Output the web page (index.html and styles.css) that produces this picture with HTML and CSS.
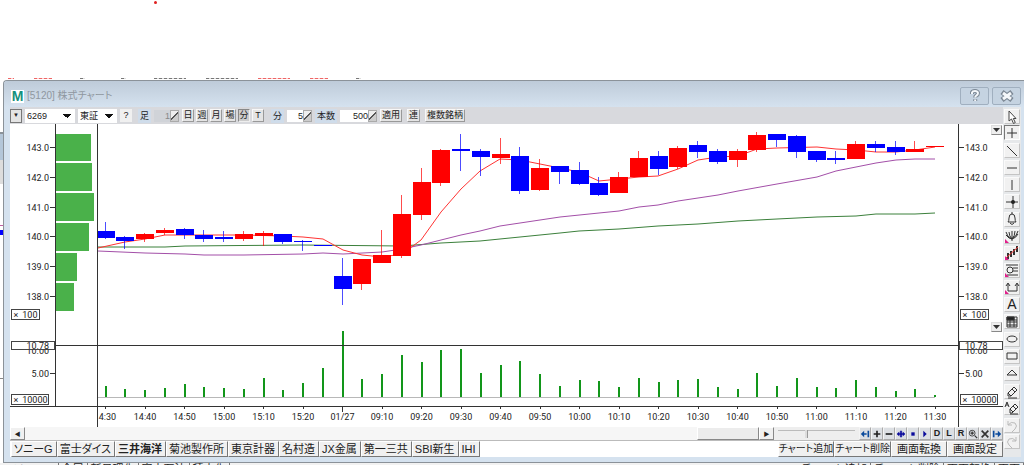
FILE: index.html
```
<!DOCTYPE html>
<html lang="ja">
<head>
  <meta charset="UTF-8" />
  <meta name="viewport" content="width=device-width, initial-scale=1" />
  <title>[5120] 株式チャート</title>
  <link rel="stylesheet" href="styles.css">
</head>
<body>
  <!-- Area above the chart window -->
  <div class="upper">
    <span class="dot"></span>
    <div class="sliver sliver-top">
      <i class="red w1"></i><i class="red w2"></i><i class="w3"></i><i class="w3"></i><i class="w4"></i><i class="w4"></i><i class="red w4"></i><i class="red w2"></i><i class="w3"></i>
    </div>
  </div>

  <div class="desk">
    <div class="edge"></div>
    <div class="window">
      <header class="titlebar">
        <span class="logo">M</span>
        <h1 class="title">[5120] 株式チャート</h1>
        <button class="cap" aria-label="ヘルプ">
          <svg width="14" height="14" viewBox="0 0 14 14"><path d="M4 5V3.500Q4.500 2 7 2t3 2q0 1.700-1.600 2.500Q7.200 7.200 7.200 8.500M7.200 10.300v1.700" fill="none" stroke="#7b8794" stroke-width="4"/><path d="M4 5V3.500Q4.500 2 7 2t3 2q0 1.700-1.600 2.500Q7.200 7.200 7.200 8.500M7.200 10.500v1.500" fill="none" stroke="#f4f7fa" stroke-width="2"/></svg>
        </button>
        <button class="cap" aria-label="閉じる">
          <svg width="14" height="14" viewBox="0 0 14 14"><path d="M2 3l10 8M12 3L2 11" stroke="#7b8794" stroke-width="5"/><path d="M3 4l8 6M11 4l-8 6" stroke="#f4f7fa" stroke-width="3"/></svg>
        </button>
      </header>

      <div class="client">
        <main class="pane">
          <!-- Toolbar -->
          <div class="bar">
            <button class="key drop" aria-label="履歴">▼</button>
            <select class="combo code" aria-label="銘柄コード"><option>6269</option></select>
            <select class="combo market" aria-label="市場"><option>東証</option></select>
            <button class="key help">?</button>
            <label class="tag" for="ashi">足</label>
            <span class="spin off"><input id="ashi" value="1" disabled><b></b></span>
            <div class="keys">
              <button class="key">日</button>
              <button class="key">週</button>
              <button class="key">月</button>
              <button class="key">場</button>
              <button class="key on">分</button>
              <button class="key">T</button>
            </div>
            <label class="tag" for="fun">分</label>
            <span class="spin"><input id="fun" value="5"><b></b></span>
            <label class="tag" for="hon">本数</label>
            <span class="spin wide"><input id="hon" value="500"><b></b></span>
            <button class="key auto">適用</button>
            <button class="key auto">連</button>
            <button class="key auto">複数銘柄</button>
          </div>

          <!-- Chart -->
          <div class="chart">
            <svg id="plot" viewBox="10 124 993 303"></svg>
            <button class="fold fold-price" aria-label="価格メニュー"><svg viewBox="0 0 9 8"><path d="M1 2h7L4.500 6z"/></svg></button>
            <button class="fold fold-volume" aria-label="出来高メニュー"><svg viewBox="0 0 9 8"><path d="M1 2h7L4.500 6z"/></svg></button>
          </div>

          <!-- Scroll row -->
          <div class="scrollrow">
            <button class="step" aria-label="左へ">◀</button>
            <div class="track"><div class="thumb"></div></div>
            <button class="step" aria-label="右へ">▶</button>
            <input class="zoomer" type="range" min="0" max="100" value="36" aria-label="表示幅">
            <div class="nav">
              <button aria-label="先頭"><svg viewBox="0 0 12 12"><path d="M1 6l4-4v8zM5 5h3v2H5zM9 2h2v8H9z" fill="#0a4a9c"/></svg></button>
              <button aria-label="拡大"><svg viewBox="0 0 12 12"><path d="M2 6h8M6 2v8" stroke="#222" stroke-width="2"/></svg></button>
              <button aria-label="縮小"><svg viewBox="0 0 12 12"><path d="M2 6h8" stroke="#222" stroke-width="2"/></svg></button>
              <button aria-label="移動"><svg viewBox="0 0 12 12"><path d="M2 6h8M6 2v8" stroke="#0b0b9c" stroke-width="2"/><path d="M1 6l3-3v6zM11 6L8 3v6z" fill="#0b0b9c"/></svg></button>
              <button aria-label="停止"><svg viewBox="0 0 12 12"><path d="M4 4h4v4H4z" fill="#0b0b9c"/></svg></button>
              <button aria-label="再生"><svg viewBox="0 0 12 12"><path d="M4 2l4 4-4 4z" fill="#0b0b9c"/></svg></button>
              <button>D</button>
              <button>L</button>
              <button>R</button>
              <button aria-label="虫眼鏡"><svg viewBox="0 0 12 12"><circle cx="5" cy="5" r="3.500" fill="none" stroke="#333"/><path d="M3 5h4M5 3v4M8 8l3 3" stroke="#333" stroke-width="1.500"/></svg></button>
              <button aria-label="解除"><svg viewBox="0 0 12 12"><path d="M2 2l8 8M10 2l-8 8" stroke="#333" stroke-width="2"/></svg></button>
              <button aria-label="末尾"><svg viewBox="0 0 12 12"><path d="M11 6L7 2v8zM4 5h3v2H4zM1 2h2v8H1z" fill="#0a4a9c"/></svg></button>
            </div>
          </div>

          <!-- Chart tabs -->
          <div class="tabs">
            <button class="tab">ソニーG</button>
            <button class="tab">富士ダイス</button>
            <button class="tab on">三井海洋</button>
            <button class="tab">菊池製作所</button>
            <button class="tab">東京計器</button>
            <button class="tab">名村造</button>
            <button class="tab">JX金属</button>
            <button class="tab">第一三共</button>
            <button class="tab">SBI新生</button>
            <button class="tab">IHI</button>
            <span class="gap"></span>
            <button class="cmd long">チャート追加</button>
            <button class="cmd long">チャート削除</button>
            <button class="cmd">画面転換</button>
            <button class="cmd">画面設定</button>
          </div>
        </main>

        <!-- Drawing tools -->
        <aside class="tools">
          <div class="set">
            <button aria-label="選択"><svg viewBox="0 0 16 16"><path d="M5 2v10l2.500-2 2 4.500 1.800-1-2-4H12z" fill="#fff" stroke="#444"/></svg></button>
            <button class="on" aria-label="十字"><svg viewBox="0 0 16 16"><path d="M3 8h10M8 3v10"/></svg></button>
          </div>
          <div class="set main">
            <button aria-label="斜線"><svg viewBox="0 0 16 16"><path d="M3 3l10 10"/></svg></button>
            <button aria-label="水平線"><svg viewBox="0 0 16 16"><path d="M3 8h10"/></svg></button>
            <button aria-label="垂直線"><svg viewBox="0 0 16 16"><path d="M8 3v10"/></svg></button>
            <button aria-label="交点"><svg viewBox="0 0 16 16"><path d="M2 8h12M9 2v12"/><circle cx="9" cy="8" r="2" fill="#222" stroke="none"/></svg></button>
            <button aria-label="アラート"><svg viewBox="0 0 16 16"><path d="M4 11q1-1 1-4 0-4 3-4t3 4q0 3 1 4zM8 3V1M6 12q2 3 4 0"/></svg></button>
            <button class="more" aria-label="ファン"><svg viewBox="0 0 16 16"><path d="M2 4q1 5 6 7 5-3 6-8M5 4q0 4 3 7M11 3q0 5-3 8M8 3v10M2 7q3 4 6 4M14 6q-2 4-6 5"/></svg></button>
            <button class="more" aria-label="チャネル"><svg viewBox="0 0 16 16"><path d="M4 8v6M7 6v6M10 4v6M13 1v6" stroke-width="2"/><path d="M2 13L14 2" stroke="#e33"/></svg></button>
            <button class="more" aria-label="期間"><svg viewBox="0 0 16 16"><path d="M2 3h12M9 6h5M9 9h5M3 13h11"/><circle cx="6" cy="8" r="3"/></svg></button>
            <button class="more" aria-label="戻り"><svg viewBox="0 0 16 16"><path d="M4 4v7h9V4M2 6l2-3 2 3M11 6l2-3 2 3"/></svg></button>
            <button class="letter">A</button>
            <button aria-label="表"><svg viewBox="0 0 16 16"><path d="M3 3h10v10H3zM3 6h10M3 8h10M3 11h10M6 3v10M10 3v10"/><path d="M3 3h7v3H3z" fill="#222"/></svg></button>
            <button aria-label="楕円"><svg viewBox="0 0 16 16"><ellipse cx="8" cy="8" rx="5" ry="3"/></svg></button>
            <button aria-label="四角"><svg viewBox="0 0 16 16"><path d="M3 5h10v6H3z"/></svg></button>
            <button aria-label="三角"><svg viewBox="0 0 16 16"><path d="M8 5l5 5H3z"/></svg></button>
          </div>
          <div class="set">
            <button aria-label="消去"><svg viewBox="0 0 16 16"><path d="M4 9l6-6 3 3-6 6H4zM4 9l3 3M8 5l3 3M4 14h9"/></svg></button>
            <button aria-label="全消去"><svg viewBox="0 0 16 16"><path d="M6 9l5-5 3 3-6 6H6zM6 9l3 3M9 6l3 3M6 14h8M1 7l2-5 2 5M2 5h2"/></svg></button>
          </div>
          <div class="set dim">
            <button disabled aria-label="元に戻す"><svg viewBox="0 0 16 16"><path d="M4 3v4h4M4 7q3-4 7-2 3 3 0 6l-3 3"/></svg></button>
            <button disabled aria-label="やり直し"><svg viewBox="0 0 16 16"><path d="M12 3v4H8M12 7Q9 3 5 5q-3 3 0 6l3 3"/></svg></button>
          </div>
        </aside>
      </div>
    </div>
  </div>

  <!-- Tab row of the window behind -->
  <div class="under">
    <span>ソニーG</span><span>金属</span><span>新日理化</span><span>富士石油</span><span>積水化</span>
    <span class="gap"></span>
    <span>チャート追加</span><span>チャート削除</span><span>画面転換</span><span>画面</span>
  </div>

  <script src="chart.js"></script>
</body>
</html>
```
FILE: styles.css
```
* { box-sizing: border-box; }
body {
  margin: 0;
  background: #fff;
  color: #222;
  font-family: "Liberation Sans", "Noto Sans CJK JP", sans-serif;
  font-size: 10px;
  overflow: hidden;
}
button, input, select {
  font: inherit;
  color: inherit;
  margin: 0;
  padding: 0;
  border-radius: 0;
}
svg { display: block; }

/* --- Above the window --- */
.upper {
  position: relative;
  height: 80px;
  display: flex;
  align-items: flex-end;
}
.dot {
  position: absolute;
  left: 154px; top: 1px;
  width: 3px; height: 3px;
  border-radius: 50%;
  background: #e02020;
}
.sliver {
  display: flex;
  gap: 20px;
  padding-left: 8px;
  height: 2px;
}
.sliver i {
  height: 1px;
  background: repeating-linear-gradient(90deg, #777 0 3px, #ddd 3px 5px);
}
.sliver .red { background: repeating-linear-gradient(90deg, #e66 0 3px, #fcc 3px 5px); }
.w1 { width: 6px; }
.w2 { width: 18px; }
.w3 { width: 5px; margin: 0 8px; }
.w4 { width: 32px; }

/* --- Window --- */
.desk { display: flex; }
.edge {
  width: 3px;
  background: linear-gradient(#fff 52px, #8b9299 52px 54px, #b4c6d8 54px 80px, #ddd 80px 104px, #fff 104px 145px, #c060a0 145px 146px, #fff 146px 150px, #00f 150px 155px, #fff 155px 298px, #888 298px 299px, #fff 299px);
}
.window {
  flex: 1;
  min-width: 0;
  background: #d5e2ef;
  border: 1px solid #8b9299;
  border-right: 0;
  border-top-left-radius: 4px;
  padding: 0 3px 5px 6px;
}
.titlebar {
  display: flex;
  align-items: center;
  gap: 3px;
  height: 26px;
  margin: 0 -3px 0 -6px;
  padding: 4px 3px 0 7px;
  background: linear-gradient(#becbd9, #d5e2ef);
  border-top-left-radius: 3px;
}
.logo {
  width: 13px;
  background: #fff;
  color: #14907c;
  font-size: 14px;
  line-height: 13px;
  font-weight: bold;
  text-align: center;
}
.title {
  flex: 1;
  margin: 0;
  font-family: "Liberation Sans", "Noto Sans CJK JP", sans-serif;
  font-size: 10px;
  line-height: 16px;
  font-weight: normal;
  color: #8f979f;
  font-feature-settings: "palt";
}
.cap {
  width: 29px;
  height: 18px;
  display: grid;
  place-items: center;
  background: #c5d3e1;
  border: 1px solid #a0afbf;
  border-radius: 2px;
}
.client {
  display: flex;
  background: #e6e8ea;
}
.pane { flex: 1; min-width: 0; background: #fff; }

/* --- Toolbar --- */
.bar {
  display: flex;
  align-items: center;
  gap: 3px;
  height: 17px;
  background: #d8d9dd;
  font-size: 9px;
  line-height: 12px;
}
.key {
  width: 12px;
  height: 13px;
  background: #e4e4e4;
  border: 1px solid;
  border-color: #f8f8f8 #999 #999 #f8f8f8;
  line-height: 11px;
  white-space: nowrap;
}
.key.drop { height: 14px; border-color: #777; font-size: 6px; }
.key.help { background: #f0f0f0; border-color: #f0f0f0; margin-right: 3px; }
.key.on { background: #ccc; border-color: #888 #eee #eee #888; }
.key.auto { width: auto; padding: 0 1px; margin-right: 2px; }
.keys { display: flex; gap: 2px; margin-right: 4px; }
.combo {
  height: 14px;
  border: 0;
  appearance: none;
  background:
    linear-gradient(45deg, transparent 50%, #111 50%) no-repeat right 8px center / 4px 4px,
    linear-gradient(-45deg, transparent 50%, #111 50%) no-repeat right 4px center / 4px 4px,
    #fff;
  padding-left: 2px;
}
.combo.code { width: 50px; }
.combo.market { width: 39px; }
.tag {
  background: #cfdcea;
  padding: 1px 2px;
  white-space: nowrap;
}
.spin { display: flex; height: 12px; }
.spin input {
  width: 16px;
  border: 0;
  background: #fff;
  text-align: right;
}
.spin.wide input { width: 28px; }
.spin.off input { background: #d0d3d8; color: #888; }
.spin b {
  width: 9px;
  border: 1px solid #aaa;
  background: linear-gradient(135deg, #eee 45%, #555 45% 55%, #ccc 55%);
}

/* --- Chart --- */
.chart { position: relative; }
#plot { width: 100%; }
#plot text {
  font-family: "Roboto", sans-serif;
  font-size: 9px;
  fill: #222;
  white-space: pre;
}
.axis { stroke: #333; fill: none; shape-rendering: crispEdges; }
.base { stroke: #b8b8b8; shape-rendering: crispEdges; }
.box { stroke: #444; fill: #fff; shape-rendering: crispEdges; }
.profile { fill: #4ab14a; }
.volume { fill: #12961a; }
.up { fill: #f00; stroke: none; }
.down { fill: #00f; stroke: none; }
.ma { fill: none; stroke-width: 1; }
.ma-short { stroke: #f33; }
.ma-mid { stroke: #a34fa8; }
.ma-long { stroke: #3b803b; }
.fold {
  position: absolute;
  right: 1px;
  width: 11px;
  height: 10px;
  background: #eee;
  border: 1px solid;
  border-color: #ddd #888 #888 #ddd;
}
.fold svg { width: 9px; height: 8px; fill: #333; }
.fold-price { top: 1px; }
.fold-volume { top: 198px; }

/* --- Scroll row --- */
.scrollrow {
  display: flex;
  height: 13px;
  background: #eee;
}
.step {
  width: 15px;
  background: #f0f0f0;
  border: 1px solid;
  border-color: #fff #888 #888 #fff;
  font-size: 6px;
  line-height: 10px;
}
.track {
  flex: 1;
  display: flex;
  justify-content: flex-end;
  background: #f6f6f6;
}
.thumb {
  width: 62px;
  background: #ececec;
  border: 1px solid;
  border-color: #fff #888 #888 #fff;
}
.zoomer {
  appearance: none;
  width: 77px;
  margin: 0 4px;
  background: linear-gradient(#bbb, #bbb) no-repeat center 3px / 100% 1px;
}
.zoomer::-webkit-slider-thumb {
  appearance: none;
  width: 3px;
  height: 8px;
  background: #ddd;
  border-right: 1px solid #999;
}
.nav { display: flex; }
.nav button {
  width: 12px;
  background: #dcdfe3;
  border: 1px solid;
  border-color: #f4f4f4 #aaa #aaa #f4f4f4;
  font-size: 9px;
  line-height: 11px;
  font-weight: bold;
}
.nav svg { width: 10px; height: 10px; }

/* --- Tabs --- */
.tabs {
  display: flex;
  height: 17px;
  padding-left: 1px;
  border-top: 1px solid #bbb;
  font-feature-settings: "palt";
  font-size: 11px;
}
.tab, .cmd {
  height: 16px;
  background: #f0f0f0;
  border: 1px solid;
  border-color: #fff #777 #777 #fff;
  line-height: 14px;
  white-space: nowrap;
}
.tab { padding: 0 3px 0 2px; }
.tab.on { font-weight: bold; }
.gap { flex: 1; }
.cmd { min-width: 56px; }
.cmd.long { font-size: 10px; }

/* --- Drawing tools --- */
.tools {
  width: 18px;
  display: flex;
  flex-direction: column;
  gap: 3px;
  padding: 2px 1px 8px;
}
.set { display: flex; flex-direction: column; gap: 1px; }
.set.main { flex: 1; justify-content: space-between; }
.tools button {
  position: relative;
  width: 16px;
  height: 15px;
  display: grid;
  place-content: center;
  background: #f1f1f1;
  border: 1px solid;
  border-color: #fafafa #c4c4c4 #c4c4c4 #fafafa;
}
.tools svg {
  width: 16px;
  height: 16px;
  fill: none;
  stroke: #333;
}
.tools .on { border-color: #777 #fff #fff #777; }
.tools .letter { font-size: 14px; line-height: 13px; }
.more::after {
  content: "";
  position: absolute;
  left: 0; bottom: 0;
  border: 2px solid;
  border-color: transparent transparent #e0208c #e0208c;
}
.tools .dim svg { stroke: #bbb; }

/* --- Window behind --- */
.under {
  display: flex;
  height: 12px;
  padding-left: 10px;
  background: #f2f2f2;
  line-height: 12px;
  font-size: 11px;
}
.under span { padding: 0 3px; border-right: 1px solid #777; white-space: nowrap; }
.under .gap { border: 0; }
```
FILE: chart.js
```
// Each candle: colour, high, body top, body bottom, low
const candles = [
  ['down', 222, 231, 238, 239], ['down', 236, 237, 241, 249], ['up', 233, 234, 239, 242],
  ['up', 228, 230, 233, 235], ['down', 228, 229, 235, 239], ['down', 230, 235, 239, 242],
  ['down', 231, 237, 239, 242], ['up', 231, 234, 239, 241], ['up', 231, 233, 236, 246],
  ['down', 234, 234, 242, 244], ['down', 240, 241, 242, 251], ['down', 245, 245, 246, 246],
  ['down', 258, 276, 289, 305], ['up', 259, 259, 284, 290], ['up', 230, 255, 263, 263],
  ['up', 195, 214, 256, 258], ['up', 168, 182, 215, 220], ['up', 149, 150, 183, 186],
  ['down', 134, 149, 151, 171], ['down', 149, 151, 157, 176], ['up', 138, 154, 158, 164],
  ['down', 147, 156, 191, 194], ['up', 159, 168, 190, 191], ['down', 166, 166, 172, 184],
  ['down', 162, 170, 184, 185], ['down', 177, 183, 195, 196], ['up', 172, 177, 193, 193],
  ['up', 151, 158, 177, 177], ['down', 151, 156, 169, 175], ['up', 146, 148, 167, 169],
  ['down', 141, 145, 152, 158], ['down', 149, 151, 162, 164], ['up', 149, 151, 160, 167],
  ['up', 132, 135, 150, 152], ['down', 134, 134, 140, 147], ['down', 135, 136, 152, 158],
  ['down', 151, 151, 160, 162], ['down', 151, 158, 160, 164], ['up', 141, 144, 159, 159],
  ['down', 141, 144, 148, 152], ['down', 141, 147, 152, 155], ['up', 141, 149, 152, 152],
  ['up', 146, 146, 147, 147]
];

const volumes = [386, 389, 390, 388, 384, 387, 388, 389, 378, 390, 383, 368, 331, 379, 374,
  355, 362, 350, 349, 373, 365, 361, 374, 386, 380, 381, 387, 378, 382, 380, 379, 387, 389,
  373, 386, 378, 387, 388, 380, 387, 391, 389, 395];

const lines = {
  long: '98,247 165,247 185,246 303,245 402,246 441,243 480,241 520,237 560,233 579,231 619,229 658,226 698,224 738,221 777,219 817,217 856,216 876,214 915,214 935,213',
  mid: '98,251 145,253 185,254 204,255 244,255 303,254 323,253 343,254 382,252 402,249 421,245 441,240 461,235 480,231 500,226 520,223 540,220 560,217 599,213 619,211 639,207 658,205 678,201 698,198 718,195 738,191 777,184 817,177 836,171 856,167 876,163 896,160 915,159 935,159',
  short: '98,248 125,242 145,239 165,235 185,235 244,235 283,236 303,237 323,239 343,250 362,255 382,257 402,254 421,240 441,212 461,189 480,171 500,159 520,160 540,164 560,168 579,172 599,181 619,179 639,177 658,176 678,169 698,160 718,157 738,156 757,149 777,148 817,147 836,149 856,150 876,152 896,152 915,150 935,147'
};

const profile = [[134, 27, 35], [163, 28, 36], [193, 28, 38], [223, 28, 33], [253, 28, 21], [283, 28, 18]];
const times = ['4:30', '14:40', '14:50', '15:00', '15:10', '15:20', '01/27', '09:10', '09:20', '09:30', '09:40',
  '09:50', '10:00', '10:10', '10:20', '10:30', '10:40', '10:50', '11:00', '11:10', '11:20', '11:30'];

const xAt = i => 105.5 + i * 19.75;
const rect = (cls, x, y, w, h) => `<rect class="${cls}" x="${x}" y="${y}" width="${w}" height="${h}"/>`;
const path = (cls, d) => `<path class="${cls}" d="${d}"/>`;
const text = (x, y, s, anchor = 'start') => `<text x="${x}" y="${y}" text-anchor="${anchor}">${s}</text>`;

let out = '';

profile.forEach(([y, h, w]) => { out += rect('profile', 56, y, w, h); });

// moving averages lie under the candles
for (const name in lines) {
  out += `<polyline class="ma ma-${name}" points="${lines[name]}"/>`;
}
candles.forEach(([cls, high, top, bottom, low], i) => {
  const left = Math.max(98, Math.round(xAt(i) - 9));
  out += `<g opacity=".7">${rect(cls, Math.round(xAt(i) - 1), high, 1, low - high)}</g>`;
  out += rect(cls, left, top, Math.round(xAt(i) - 9) + 18 - left, bottom - top);
});

// volume
out += path('base', 'M98 397.5H935');
volumes.forEach((y, i) => { out += rect('volume', Math.round(xAt(i) - 1), y, 2, 397 - y); });

// axes
out += path('axis', 'M55.5 124V406M97.5 124V427M958.500 124V427M55 345.500H958M10 406.500H1003');
[143, 142, 141, 140, 139, 138].forEach((p, i) => {
  const y = 148 + i * 30 - Math.round(i / 5);
  out += path('axis', `M50 ${y - .5}h5M959 ${y - .5}h5`);
  out += text(49, y + 3, p + '.0', 'end') + text(965, y + 3, p + '.0');
});
out += path('axis', 'M50 373.500h5M959 373.500h5');
out += text(49, 377, '5.00', 'end') + text(965, 377, '5.00');
out += text(49, 354, '10.00', 'end') + text(965, 354, '10.00');
out += rect('box', 11.5, 341.5, 43, 8) + rect('box', 959.5, 341.5, 43, 8);
out += text(49, 349, '10.78', 'end') + text(965, 349, '10.78');
[11.5, 960.5].forEach(x => {
  out += rect('box', x, 309.5, 28, 10) + text(x + 2, 318, '×') + text(x + 26, 318, '100', 'end');
  out += rect('box', x, 394.5, 37, 10) + text(x + 2, 403, '×') + text(x + 36, 403, '10000', 'end');
});

times.forEach((t, i) => {
  const x = xAt(i * 2);
  out += path('axis', `M${x} 406v${t === '01/27' ? 6 : 3}`);
  out += text(i ? x : x + 2, 420, t, 'middle');
});

document.getElementById('plot').innerHTML = out;
```
